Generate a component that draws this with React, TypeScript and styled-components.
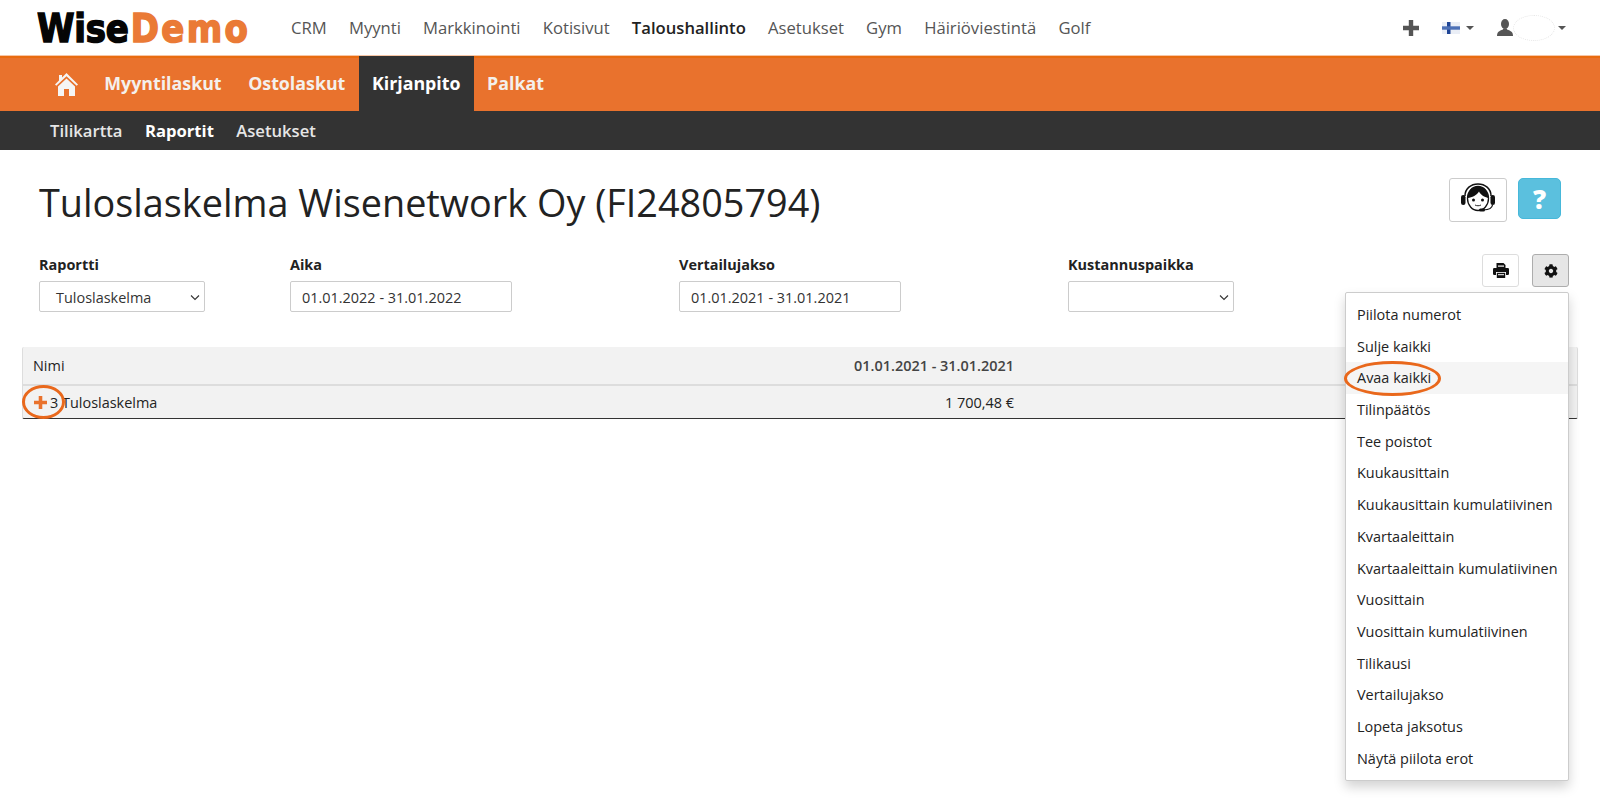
import React from "react";
import styled, { createGlobalStyle } from "styled-components";
import { FaCog } from "react-icons/fa";

const Global = createGlobalStyle`
  html, body { margin: 0; padding: 0; background: #fff; }
  body { font-family: "Open Sans", "Liberation Sans", sans-serif; font-size: 14.45px; color: #222; }
  * { box-sizing: border-box; }
`;

const Page = styled.div`
  position: relative;
  width: 1600px;
  height: 804px;
  overflow: hidden;
`;

const TopBar = styled.header`
  height: 56px;
  display: flex;
  align-items: center;
  padding: 0 34px 0 37px;
  border-bottom: 1px solid #f7c6a6;
`;

const Logo = styled.div`
  width: 254px;
  flex: none;
  display: flex;
  font-family: "DejaVu Sans", sans-serif;
  font-weight: 700;
  font-size: 34px;
  line-height: 40px;
  transform-origin: left center;
  transform: scaleY(1.15);
  -webkit-text-stroke: 1.4px currentColor;
`;

const LogoPart = styled.span<{ $orange?: boolean }>`
  color: ${(p) => (p.$orange ? "#ea7a36" : "#050505")};
  letter-spacing: ${(p) => (p.$orange ? "2.4px" : "-0.2px")};
  margin-left: ${(p) => (p.$orange ? "2px" : "0")};
`;

const TopLinks = styled.nav`
  display: flex;
  gap: 22.2px;
  flex: 1;
`;

const TopLink = styled.a<{ $active?: boolean }>`
  font-size: 16.65px;
  color: ${(p) => (p.$active ? "#222" : "#555")};
  font-weight: ${(p) => (p.$active ? 600 : 400)};
`;

const TopTools = styled.div`
  display: flex;
  align-items: center;
  color: #555;
`;

const Caret = styled.span`
  width: 0;
  height: 0;
  margin-left: 6px;
  border-left: 4px solid transparent;
  border-right: 4px solid transparent;
  border-top: 4px solid #555;
`;

const FlagBox = styled.span`
  display: flex;
  align-items: center;
  margin: 0 23px;
`;

const UserBox = styled.span`
  display: flex;
  align-items: center;
`;

const Blur = styled.span`
  width: 42px;
  height: 26px;
  margin-right: -3px;
  border-radius: 50%;
  border: 1px dotted #e6e6e6;
`;

const MainNav = styled.nav`
  height: 55px;
  background: #e9722d;
  border-top: 2px solid #e96b10;
  display: flex;
  padding-left: 41px;
`;

const HomeLink = styled.a`
  display: flex;
  align-items: center;
  justify-content: center;
  width: 50px;
  padding-bottom: 2px;
  color: #f5f5f5;
`;

const MainLink = styled.a<{ $active?: boolean }>`
  display: flex;
  align-items: center;
  padding: ${(p) => (p.$active ? "2px" : "0")} 13.3px 3px;
  margin-top: ${(p) => (p.$active ? "-2px" : "0")};
  font-size: 17.8px;
  font-weight: 700;
  color: ${(p) => (p.$active ? "#fff" : "#f4f0ec")};
  background: ${(p) => (p.$active ? "#333" : "transparent")};
`;

const SubNav = styled.nav`
  height: 39px;
  background: #333;
  display: flex;
  align-items: center;
  gap: 22.4px;
  padding-left: 50px;
`;

const SubLink = styled.a<{ $active?: boolean }>`
  font-size: 16.65px;
  font-weight: ${(p) => (p.$active ? 700 : 600)};
  color: ${(p) => (p.$active ? "#fff" : "#e6e6e6")};
`;

const Content = styled.main`
  padding: 28px 22px 0;
`;

const TitleRow = styled.div`
  display: flex;
  justify-content: space-between;
  padding: 0 17px;
`;

const Title = styled.h1`
  margin: 0;
  font-size: 37.8px;
  font-weight: 400;
  line-height: 50px;
  color: #222;
`;

const TitleTools = styled.div`
  display: flex;
  gap: 11px;
  align-items: flex-start;
`;

const AgentButton = styled.button`
  width: 58px;
  height: 44px;
  padding: 0 0 4px;
  display: flex;
  align-items: center;
  justify-content: center;
  background: #fff;
  border: 1px solid #ccc;
  border-radius: 3px;
`;

const HelpButton = styled.button`
  width: 43px;
  height: 41px;
  padding: 0;
  background: #5bc0de;
  border: 1px solid #46b8da;
  border-radius: 5px;
  color: #fff;
  font-family: inherit;
  font-size: 26px;
  font-weight: 800;
  line-height: 38px;
`;

const Filters = styled.div`
  display: grid;
  grid-template-columns: 251px 389px 389px 1fr auto;
  margin-top: 26px;
  padding: 0 9px 0 17px;
  height: 93px;
`;

const Field = styled.div`
  display: flex;
  flex-direction: column;
`;

const Label = styled.label`
  font-weight: 700;
  line-height: 20px;
  color: #222;
  margin: 1px 0 6px;
`;

const SelectBox = styled.div`
  width: 166px;
  height: 31px;
  display: flex;
  align-items: center;
  justify-content: space-between;
  padding: 1px 4px 0 16px;
  border: 1px solid #ccc;
  border-radius: 2px;
  color: #333;
`;

const DateBox = styled.div`
  width: 222px;
  height: 31px;
  display: flex;
  align-items: center;
  padding: 1px 11px 0;
  border: 1px solid #ccc;
  border-radius: 2px;
  color: #333;
`;

const Tools = styled.div`
  display: flex;
  gap: 13px;
  align-items: flex-start;
`;

const ToolButton = styled.button<{ $on?: boolean }>`
  width: 37px;
  height: 33px;
  padding: 0;
  display: flex;
  align-items: center;
  justify-content: center;
  color: #111;
  background: ${(p) => (p.$on ? "#e6e6e6" : "#fff")};
  border: 1px solid ${(p) => (p.$on ? "#adadad" : "#ddd")};
  border-radius: 3px;
`;

const Table = styled.div`
  border-bottom: 1px solid #333;
  border-left: 1px solid #ddd;
  border-right: 1px solid #ddd;
  border-radius: 2px;
  background: #f2f2f2;
`;

const Row = styled.div<{ $head?: boolean }>`
  display: grid;
  grid-template-columns: 1fr 170px 563px;
  align-items: center;
  height: ${(p) => (p.$head ? "39px" : "32px")};
  padding-left: ${(p) => (p.$head ? "10px" : "5px")};
  color: #222;
  border-bottom: ${(p) => (p.$head ? "2px solid #ddd" : "none")};
`;

const NameCell = styled.div`
  display: flex;
  align-items: center;
  gap: 3px;
`;

const PlusMark = styled.span`
  display: flex;
  margin-left: 6px;
`;

const Amount = styled.div<{ $bold?: boolean }>`
  text-align: right;
  white-space: nowrap;
  font-weight: ${(p) => (p.$bold ? 600 : 400)};
  color: ${(p) => (p.$bold ? "#444" : "#222")};
`;

const Menu = styled.ul`
  position: absolute;
  left: 1345px;
  top: 292px;
  width: 224px;
  margin: 0;
  padding: 6px 0;
  list-style: none;
  background: #fff;
  border: 1px solid #ccc;
  border-radius: 2px;
  box-shadow: 0 6px 12px rgba(0, 0, 0, 0.175);
`;

const MenuItem = styled.li<{ $hover?: boolean }>`
  height: 31.7px;
  line-height: 32px;
  padding-left: 11px;
  white-space: nowrap;
  color: #222;
  background: ${(p) => (p.$hover ? "#f5f5f5" : "transparent")};
`;

const Ring = styled.span`
  position: absolute;
  border: 3px solid #e9681c;
  border-radius: 50%;
  pointer-events: none;
`;

const RingMenu = styled(Ring)`
  left: 1344px;
  top: 361px;
  width: 97px;
  height: 35px;
`;

const RingPlus = styled(Ring)`
  left: 22px;
  top: 385px;
  width: 43px;
  height: 34px;
`;

const menu = [
  "Piilota numerot", "Sulje kaikki", "Avaa kaikki", "Tilinpäätös", "Tee poistot", "Kuukausittain",
  "Kuukausittain kumulatiivinen", "Kvartaaleittain", "Kvartaaleittain kumulatiivinen", "Vuosittain",
  "Vuosittain kumulatiivinen", "Tilikausi", "Vertailujakso", "Lopeta jaksotus", "Näytä piilota erot",
];

const Chevron = () => (
  <svg width="10" height="7" viewBox="0 0 10 7" fill="none" stroke="#333" strokeWidth="1.100">
    <path d="M1 1.500 5 5.500 9 1.500" />
  </svg>
);

const Cross = ({ size, color }: { size: number; color: string }) => (
  <svg width={size} height={size} viewBox="0 0 16 16" fill={color}>
    <path d="M5.800 0h4.400v5.800H16v4.400h-5.800V16H5.800v-5.800H0V5.800h5.800z" />
  </svg>
);

const Home = () => (
  <svg width="23" height="24" viewBox="0 0 23 24" fill="currentColor">
    <path d="M11.500 1 23 12.500l-1.300 1.300-10.200-9.600L1.300 13.800 0 12.500 4 8.500V3h3v2.500z" />
    <path d="M11.500 6.500 20 14.500V24h-6v-7H9v7H3v-9.500z" />
  </svg>
);

const Flag = () => (
  <svg width="18" height="12" viewBox="0 0 18 12">
    <rect width="18" height="12" fill="#eaeef6" />
    <rect x="5" width="3.500" height="12" fill="#1f4596" />
    <rect y="4.300" width="18" height="3.400" fill="#4c70b6" />
  </svg>
);

const User = () => (
  <svg width="16" height="17" viewBox="0 0 16 17" fill="currentColor">
    <ellipse cx="8" cy="5" rx="4" ry="5" />
    <path d="M0 17c0-4 2-5 6-6.500v-1h4v1c4 1.500 6 2.500 6 6.500z" />
  </svg>
);

const Printer = () => (
  <svg width="16" height="15" viewBox="0 0 16 15">
    <path d="M3.500 0h7l2 2v3.500h-9z" fill="#111" />
    <rect x="5" y="2.500" width="6" height="1.200" fill="#fff" />
    <rect x="0" y="5" width="16" height="7" rx="1.200" fill="#111" />
    <rect x="3" y="9" width="10" height="6" fill="#fff" />
    <rect x="3.800" y="9.800" width="8.400" height="5.200" fill="#111" />
    <rect x="5" y="11.200" width="6" height="1" fill="#fff" />
  </svg>
);

const Agent = () => (
  <svg width="34" height="30" viewBox="0 0 34 30">
    <path d="M4 13C4 5.500 10 1 17 1s13 4.500 13 12" fill="none" stroke="#111" strokeWidth="1.500" />
    <rect x="0" y="12" width="4.500" height="10" rx="2.200" fill="#111" />
    <rect x="29.500" y="12" width="4.500" height="10" rx="2.200" fill="#111" />
    <ellipse cx="17" cy="15.500" rx="10.500" ry="12" fill="#fff" stroke="#111" strokeWidth="1.300" />
    <path d="M6.800 15C7 7 11.500 3.500 17 3.500S27 7 27.200 15C23.500 14 19.500 12 18 8.500 16 12 11 14.500 6.800 15z" fill="#111" />
    <circle cx="12.500" cy="17" r="1.500" fill="#111" />
    <circle cx="21.500" cy="17" r="1.500" fill="#111" />
    <path d="M14 22c2 1 4 1 6 0" stroke="#111" strokeWidth=".9" fill="none" />
    <path d="M31.500 22c-.5 3.500-4 4.800-9 5" stroke="#111" strokeWidth="1.200" fill="none" />
    <rect x="18" y="25.500" width="6" height="3" rx="1.500" fill="#111" />
  </svg>
);

export default function App() {
  return (
    <Page>
      <Global />
      <TopBar>
        <Logo>
          <LogoPart>Wise</LogoPart>
          <LogoPart $orange>Demo</LogoPart>
        </Logo>
        <TopLinks>
          <TopLink>CRM</TopLink>
          <TopLink>Myynti</TopLink>
          <TopLink>Markkinointi</TopLink>
          <TopLink>Kotisivut</TopLink>
          <TopLink $active>Taloushallinto</TopLink>
          <TopLink>Asetukset</TopLink>
          <TopLink>Gym</TopLink>
          <TopLink>Häiriöviestintä</TopLink>
          <TopLink>Golf</TopLink>
        </TopLinks>
        <TopTools>
          <Cross size={16} color="#555" />
          <FlagBox>
            <Flag />
            <Caret />
          </FlagBox>
          <UserBox>
            <User />
            <Blur />
            <Caret />
          </UserBox>
        </TopTools>
      </TopBar>
      <MainNav>
        <HomeLink>
          <Home />
        </HomeLink>
        <MainLink>Myyntilaskut</MainLink>
        <MainLink>Ostolaskut</MainLink>
        <MainLink $active>Kirjanpito</MainLink>
        <MainLink>Palkat</MainLink>
      </MainNav>
      <SubNav>
        <SubLink>Tilikartta</SubLink>
        <SubLink $active>Raportit</SubLink>
        <SubLink>Asetukset</SubLink>
      </SubNav>
      <Content>
        <TitleRow>
          <Title>Tuloslaskelma Wisenetwork Oy (FI24805794)</Title>
          <TitleTools>
            <AgentButton>
              <Agent />
            </AgentButton>
            <HelpButton>?</HelpButton>
          </TitleTools>
        </TitleRow>
        <Filters>
          <Field>
            <Label>Raportti</Label>
            <SelectBox>
              Tuloslaskelma
              <Chevron />
            </SelectBox>
          </Field>
          <Field>
            <Label>Aika</Label>
            <DateBox>01.01.2022 - 31.01.2022</DateBox>
          </Field>
          <Field>
            <Label>Vertailujakso</Label>
            <DateBox>01.01.2021 - 31.01.2021</DateBox>
          </Field>
          <Field>
            <Label>Kustannuspaikka</Label>
            <SelectBox>
              <span />
              <Chevron />
            </SelectBox>
          </Field>
          <Tools>
            <ToolButton>
              <Printer />
            </ToolButton>
            <ToolButton $on>
              <FaCog size={14} />
            </ToolButton>
          </Tools>
        </Filters>
        <Table>
          <Row $head>
            <div>Nimi</div>
            <Amount $bold>01.01.2021 - 31.01.2021</Amount>
          </Row>
          <Row>
            <NameCell>
              <PlusMark>
                <Cross size={13} color="#e9722d" />
              </PlusMark>
              3 Tuloslaskelma
            </NameCell>
            <Amount>1 700,48 €</Amount>
          </Row>
        </Table>
      </Content>
      <Menu>
        {menu.map((m) => (
          <MenuItem key={m} $hover={m === "Avaa kaikki"}>
            {m}
          </MenuItem>
        ))}
      </Menu>
      <RingMenu />
      <RingPlus />
    </Page>
  );
}
